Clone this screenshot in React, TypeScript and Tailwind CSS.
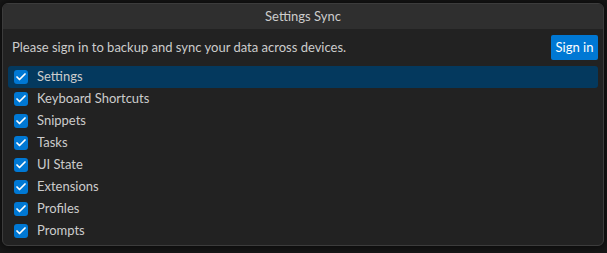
import { Check } from "lucide-react";

const items = [
  "Settings",
  "Keyboard Shortcuts",
  "Snippets",
  "Tasks",
  "UI State",
  "Extensions",
  "Profiles",
  "Prompts",
];

export default function App() {
  return (
    <div
      className="h-[253px] w-[607px] overflow-hidden bg-[#181818] pt-[3px] pl-[2px]"
      style={{ fontFamily: 'Lato, "Noto Sans", sans-serif' }}
    >
      <div className="w-[602px] h-[243px] overflow-hidden rounded-[6px] border border-[#3c3c3c] bg-[#222222] shadow-[0_0_8px_2px_rgba(0,0,0,0.6)]">
        {/* title */}
        <div className="flex h-[25px] items-center justify-center bg-[#2f2f2f] text-[13px] text-[#cccccc]">
          Settings Sync
        </div>

        {/* message + button */}
        <div className="flex h-[37px] items-center justify-between pl-[9px] pr-[5px]">
          <span className="text-[13px] text-[#cccccc]">
            Please sign in to backup and sync your data across devices.
          </span>
          <button className="h-[25px] w-[47px] rounded-[2px] bg-[#0078d4] text-[13px] text-white">
            Sign in
          </button>
        </div>

        {/* list */}
        <div className="flex flex-col px-[5px]">
          {items.map((item, i) => (
            <div
              key={item}
              className={
                "flex h-[22px] items-center rounded-[3px] pl-[6px] " +
                (i === 0 ? "bg-[#04395e]" : "")
              }
            >
              <div className="flex h-[14px] w-[14px] items-center justify-center rounded-[3px] bg-[#0078d4]">
                <Check size={12} strokeWidth={3.5} color="#ffffff" />
              </div>
              <span className="ml-[9px] text-[13px] text-[#cccccc]">{item}</span>
            </div>
          ))}
        </div>
      </div>
    </div>
  );
}
